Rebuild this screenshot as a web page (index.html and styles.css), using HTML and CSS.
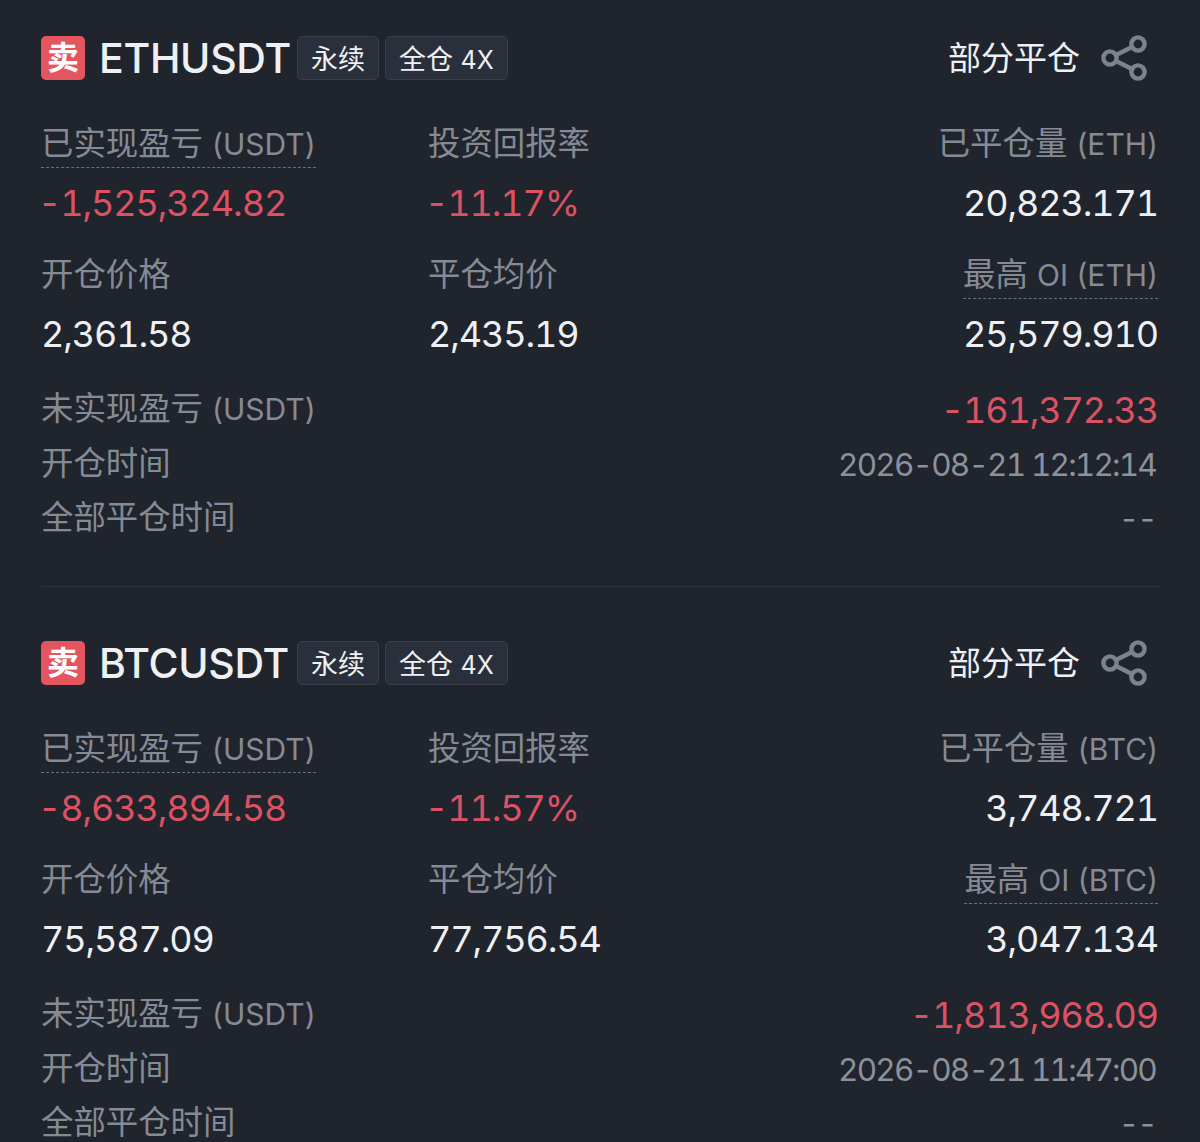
FILE: index.html
```html
<!DOCTYPE html>
<html lang="zh-CN">
<head>
    <meta charset="UTF-8">
    <meta name="viewport" content="width=device-width, initial-scale=1.0">
    <title>仓位历史</title>
    <link rel="stylesheet" href="styles.css">
</head>
<body>
    <div class="position">
        <div class="head">
            <span class="side">卖</span>
            <span class="symbol">ETHUSDT</span>
            <span class="tag">永续</span>
            <span class="tag tag-wide"><span>全仓 <small>4X</small></span></span>
            <span class="status">部分平仓</span>
            <svg class="share" viewBox="-2 0 48 46" fill="none" stroke="#7d838e" stroke-width="4.4">
                <circle cx="8" cy="23" r="6.6"/>
                <circle cx="36" cy="9" r="6.6"/>
                <circle cx="36" cy="37" r="6.6"/>
                <path d="M14 20 L30 12 M14 26 L30 34"/>
            </svg>
        </div>
        <div class="stats">
            <div class="stat">
                <span class="label dotted">已实现盈亏 <small>(USDT)</small></span>
                <span class="value red">-1,525,324.82</span>
            </div>
            <div class="stat">
                <span class="label">投资回报率</span>
                <span class="value red">-11.17%</span>
            </div>
            <div class="stat right">
                <span class="label">已平仓量 <small>(ETH)</small></span>
                <span class="value">20,823.171</span>
            </div>
            <div class="stat">
                <span class="label">开仓价格</span>
                <span class="value">2,361.58</span>
            </div>
            <div class="stat">
                <span class="label">平仓均价</span>
                <span class="value">2,435.19</span>
            </div>
            <div class="stat right">
                <span class="label dotted">最高 <small>OI (ETH)</small></span>
                <span class="value">25,579.910</span>
            </div>
        </div>
        <div class="rows">
            <div class="row">
                <span class="label">未实现盈亏 <small>(USDT)</small></span>
                <span class="value red">-161,372.33</span>
            </div>
            <div class="row">
                <span class="label">开仓时间</span>
                <span class="time">2026-08-21 12:12:14</span>
            </div>
            <div class="row">
                <span class="label">全部平仓时间</span>
                <span class="time">--</span>
            </div>
        </div>
    </div>

    <div class="position">
        <div class="head">
            <span class="side">卖</span>
            <span class="symbol">BTCUSDT</span>
            <span class="tag">永续</span>
            <span class="tag tag-wide"><span>全仓 <small>4X</small></span></span>
            <span class="status">部分平仓</span>
            <svg class="share" viewBox="-2 0 48 46" fill="none" stroke="#7d838e" stroke-width="4.4">
                <circle cx="8" cy="23" r="6.6"/>
                <circle cx="36" cy="9" r="6.6"/>
                <circle cx="36" cy="37" r="6.6"/>
                <path d="M14 20 L30 12 M14 26 L30 34"/>
            </svg>
        </div>
        <div class="stats">
            <div class="stat">
                <span class="label dotted">已实现盈亏 <small>(USDT)</small></span>
                <span class="value red">-8,633,894.58</span>
            </div>
            <div class="stat">
                <span class="label">投资回报率</span>
                <span class="value red">-11.57%</span>
            </div>
            <div class="stat right">
                <span class="label">已平仓量 <small>(BTC)</small></span>
                <span class="value">3,748.721</span>
            </div>
            <div class="stat">
                <span class="label">开仓价格</span>
                <span class="value">75,587.09</span>
            </div>
            <div class="stat">
                <span class="label">平仓均价</span>
                <span class="value">77,756.54</span>
            </div>
            <div class="stat right">
                <span class="label dotted">最高 <small>OI (BTC)</small></span>
                <span class="value">3,047.134</span>
            </div>
        </div>
        <div class="rows">
            <div class="row">
                <span class="label">未实现盈亏 <small>(USDT)</small></span>
                <span class="value red">-1,813,968.09</span>
            </div>
            <div class="row">
                <span class="label">开仓时间</span>
                <span class="time">2026-08-21 11:47:00</span>
            </div>
            <div class="row">
                <span class="label">全部平仓时间</span>
                <span class="time">--</span>
            </div>
        </div>
    </div>
</body>
</html>
```

FILE: styles.css
```css
body {
    margin: 0;
    height: 1142px;
    overflow: hidden;
    padding-top: 36px;
    box-sizing: border-box;
    background-color: #20242d;
    font-family: Inter, "Noto Sans CJK SC", sans-serif;
    color: #eef0f3;
}

.position {
    margin: 0 40px 54px 41px;
    height: 550px;
    border-bottom: 1px solid #2c313b;
}

.position:last-child {
    height: 516px;
    margin-bottom: 0;
    border-bottom: none;
}

.head {
    display: flex;
    align-items: center;
    height: 44px;
}

.side {
    width: 44px;
    height: 44px;
    border-radius: 5px;
    background-color: #e5555f;
    color: #fff;
    font-size: 32px;
    font-weight: 700;
    line-height: 44px;
    text-align: center;
}

.symbol {
    width: 191px;
    margin-left: 14px;
    font-size: 41px;
    font-weight: 500;
    letter-spacing: -0.3px;
    white-space: nowrap;
}

.tag {
    display: flex;
    align-items: center;
    box-sizing: border-box;
    height: 44px;
    margin-left: 7px;
    padding: 0 13px 2px;
    border: 1px solid #383e4a;
    border-radius: 5px;
    background-color: #2a303b;
    font-size: 27px;
}

.tag-wide {
    margin-left: 6px;
    padding: 0 13px 2px;
}

.tag small {
    font-size: 25px;
}

.status {
    margin-left: auto;
    font-size: 33px;
    line-height: 44px;
}

.share {
    width: 48px;
    height: 46px;
    margin-left: 20px;
    margin-right: 12px;
}

.stats {
    display: grid;
    grid-template-columns: 387px 1fr auto;
    margin-top: 41px;
    row-gap: 25px;
}

.stat {
    display: flex;
    flex-direction: column;
    align-items: flex-start;
}

.stat.right {
    align-items: flex-end;
    margin-right: 2px;
}

.label {
    height: 48px;
    color: #858b95;
    font-size: 32.4px;
    line-height: 46px;
}

.label small {
    font-size: 30px;
}

.dotted {
    box-sizing: border-box;
    height: 47px;
    margin-bottom: 1px;
    border-bottom: 1px dashed #6a707b;
}

.value {
    margin-top: 10px;
    font-size: 36px;
    font-variant-numeric: tabular-nums;
    letter-spacing: -1.1px;
    line-height: 48px;
}

.stat .red {
    margin-left: -3px;
}

.red {
    color: #dc5262;
}

.rows {
    margin-top: 25px;
    margin-right: 2px;
}

.row {
    display: flex;
    justify-content: space-between;
    align-items: center;
    height: 54.5px;
}

.row .value {
    margin-top: 0;
}

.time {
    margin-right: 2px;
    color: #8c929c;
    font-size: 31.5px;
    font-variant-numeric: tabular-nums;
    letter-spacing: -1.8px;
    line-height: 44px;
}
```
